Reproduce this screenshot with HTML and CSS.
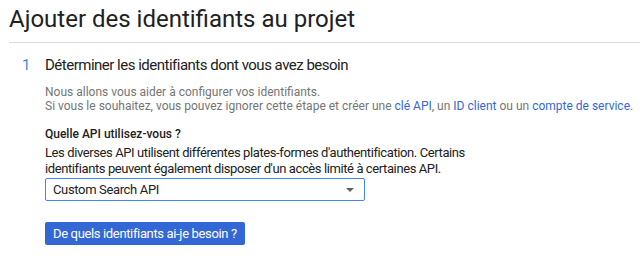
FILE: index.html
```html
<!DOCTYPE html>
<html lang="fr">
<head>
  <meta charset="UTF-8">
  <title>Ajouter des identifiants au projet</title>
  <link rel="stylesheet" href="styles.css">
</head>
<body>

  <div class="page">
    <h1 class="page-title">Ajouter des identifiants au projet</h1>

    <div class="step">
      <div class="step-num">1</div>
      <div class="step-body">
        <h2 class="step-title">Déterminer les identifiants dont vous avez besoin</h2>
        <p class="intro">
          Nous allons vous aider à configurer vos identifiants.<br>
          Si vous le souhaitez, vous pouvez ignorer cette étape et créer une <a href="#">clé API</a>, un <a href="#">ID client</a> ou un <a href="#">compte de service</a>.
        </p>

        <label class="field-label" for="api">Quelle API utilisez-vous ?</label>
        <p class="field-help">
          Les diverses API utilisent différentes plates-formes d'authentification. Certains<br>
          identifiants peuvent également disposer d'un accès limité à certaines API.
        </p>
        <div class="select" id="api">
          <span>Custom Search API</span>
          <span class="caret"></span>
        </div>

        <button type="button" class="btn-primary">De quels identifiants ai-je besoin ?</button>
      </div>
    </div>
  </div>

</body>
</html>
```

FILE: styles.css
```css
body {
  font-family: Roboto, Arial, sans-serif;
  margin: 0;
  background: #fff;
  color: #212121;
}

.page {
  padding: 0 0 0 9px;
}

.page-title {
  font-size: 24px;
  font-weight: 400;
  margin: 0;
  padding: 5px 0 8px;
  line-height: 29px;
  border-bottom: 1px solid #dadada;
}

.step {
  display: flex;
  padding-top: 12px;
}

.step-num {
  width: 36px;
  padding-left: 13px;
  box-sizing: border-box;
  color: #4285f4;
  font-size: 15px;
  line-height: 20px;
}

.step-title {
  font-size: 15px;
  font-weight: 400;
  letter-spacing: -0.5px;
  margin: 0;
  line-height: 20px;
}

.intro {
  font-size: 12px;
  color: #757575;
  line-height: 14px;
  margin: 10px 0 0;
}

.intro a {
  color: #3367d6;
  text-decoration: none;
}

.field-label {
  display: block;
  font-size: 12px;
  font-weight: 500;
  margin-top: 13px;
  line-height: 16px;
}

.field-help {
  font-size: 13px;
  letter-spacing: -0.4px;
  line-height: 16px;
  margin: 3px 0 1px;
}

.select {
  width: 320px;
  height: 23px;
  box-sizing: border-box;
  border: 1px solid #4285f4;
  border-radius: 2px;
  display: flex;
  align-items: center;
  justify-content: space-between;
  padding: 0 7px;
  font-size: 13px;
  letter-spacing: -0.35px;
  background: #fff;
}

.caret {
  width: 0;
  height: 0;
  border-left: 4px solid transparent;
  border-right: 4px solid transparent;
  border-top: 4px solid #616161;
  margin-right: 3px;
}

.btn-primary {
  display: block;
  margin-top: 21px;
  background-color: #3367d6;
  color: #fff;
  border: none;
  border-radius: 2px;
  font-family: Roboto, Arial, sans-serif;
  font-size: 13px;
  letter-spacing: -0.35px;
  height: 23px;
  padding: 0 8px;
  cursor: pointer;
}
```
